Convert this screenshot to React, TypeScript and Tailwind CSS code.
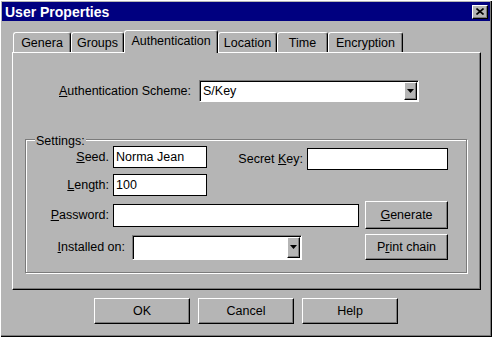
import React from 'react';

const raised =
  'border border-t-white border-l-white border-r-black border-b-black shadow-[inset_-1px_-1px_0_#7b7b7b]';
const sunken =
  'border border-t-[#7b7b7b] border-l-[#7b7b7b] border-r-white border-b-white shadow-[inset_1px_1px_0_#000]';

const tabs = [
  { label: 'Genera', w: 'w-[58px]' },
  { label: 'Groups', w: 'w-[53px]' },
  { label: 'Authentication', w: 'w-[94px]', active: true },
  { label: 'Location', w: 'w-[59px]' },
  { label: 'Time', w: 'w-[51px]' },
  { label: 'Encryption', w: 'w-[75px]' },
];

const Arrow = () => (
  <svg width="7" height="4" viewBox="0 0 7 4">
    <polygon points="0,0 7,0 3.5,4" fill="#000" />
  </svg>
);

const Combo = ({ value, className }: { value?: string; className: string }) => (
  <div className={`flex bg-white p-[1px] ${sunken} ${className}`}>
    <div className="flex-1 flex items-center pl-[2px] text-black">{value}</div>
    <div className={`w-[13px] flex items-center justify-center bg-[#b5b5b5] ${raised}`}>
      <Arrow />
    </div>
  </div>
);

const Btn = ({ children, className }: { children: React.ReactNode; className: string }) => (
  <button className={`flex items-center justify-center bg-[#b5b5b5] text-black ${raised} ${className}`}>
    {children}
  </button>
);

const Field = ({ value, className }: { value?: string; className: string }) => (
  <div className={`flex items-center bg-white border border-black pl-[2px] ${className}`}>{value}</div>
);

export default function App() {
  return (
    <div className="w-[492px] h-[337px] bg-[#b5b5b5] p-[2px] font-['Liberation_Sans',Arial,sans-serif] text-[12.5px] text-black shadow-[inset_1px_1px_0_#fff,inset_-1px_-1px_0_#000,inset_-2px_-2px_0_#7b7b7b]">
      {/* Title bar */}
      <div className="h-[19px] bg-[#000080] flex items-center justify-between pl-[3px] pr-[2px]">
        <span className="text-white font-bold text-[14px] leading-none">User Properties</span>
        <div className={`w-[16px] h-[14px] bg-[#b5b5b5] flex items-center justify-center ${raised}`}>
          <svg width="8" height="7" viewBox="0 0 8 7">
            <path d="M0.5 0.5 L7.5 6.5 M7.5 0.5 L0.5 6.5" stroke="#000" strokeWidth="1.6" />
          </svg>
        </div>
      </div>

      {/* Tabs */}
      <div className="mt-[9px] ml-[11px] flex items-end h-[22px]">
        {tabs.map((t) =>
          t.active ? (
            <div
              key={t.label}
              className={`${t.w} h-[23px] -mb-[1px] relative z-10 bg-[#b5b5b5] rounded-t-[3px] border-t border-l border-r border-t-white border-l-white border-r-black shadow-[inset_-1px_0_0_#7b7b7b] flex items-start justify-center pt-[1px]`}
            >
              {t.label}
            </div>
          ) : (
            <div
              key={t.label}
              className={`${t.w} h-[20px] rounded-t-[3px] border-t border-l border-r border-t-white border-l-white border-r-black shadow-[inset_-1px_0_0_#7b7b7b] flex items-center justify-center pt-[1px]`}
            >
              {t.label}
            </div>
          )
        )}
      </div>

      {/* Panel */}
      <div className="ml-[10px] w-[469px] h-[238px] border border-t-white border-l-white border-r-black border-b-black shadow-[inset_-1px_-1px_0_#7b7b7b] pt-[27px]">
        <div className="flex items-center pl-[46px]">
          <span className="w-[134px]">
            <u>A</u>uthentication Scheme:
          </span>
          <Combo value="S/Key" className="ml-[6px] w-[220px] h-[22px]" />
        </div>

        {/* Settings group */}
        <div className="relative ml-[12px] mt-[37px] w-[442px] h-[134px] border border-[#7b7b7b] shadow-[inset_1px_1px_0_#fff,1px_1px_0_#fff] pt-[6px]">
          <span className="absolute -top-[8px] left-[9px] bg-[#b5b5b5] px-[1px]">Settings:</span>

          <div className="flex items-start">
            <span className="w-[83px] h-[22px] flex items-center justify-end">
              <u>S</u>eed.
            </span>
            <Field value="Norma Jean" className="ml-[4px] w-[94px] h-[22px]" />
            <span className="w-[96px] h-[22px] mt-[2px] flex items-center justify-end">
              Secret&nbsp;<u>K</u>ey:
            </span>
            <Field className="ml-[4px] mt-[2px] w-[141px] h-[22px]" />
          </div>

          <div className="flex items-center mt-[4px]">
            <span className="w-[83px] text-right">
              <u>L</u>ength:
            </span>
            <Field value="100" className="ml-[4px] w-[94px] h-[22px]" />
          </div>

          <div className="flex items-center mt-[5px]">
            <span className="w-[83px] text-right">
              <u>P</u>assword:
            </span>
            <Field className="ml-[4px] w-[246px] h-[23px]" />
            <Btn className="ml-[6px] w-[83px] h-[28px]">
              <span>
                <u>G</u>enerate
              </span>
            </Btn>
          </div>

          <div className="flex items-center mt-[5px]">
            <span className="w-[99px] text-right">
              <u>I</u>nstalled on:
            </span>
            <Combo className="ml-[7px] w-[170px] h-[25px]" />
            <Btn className="ml-[63px] w-[83px] h-[26px]">
              <span>
                P<u>r</u>int chain
              </span>
            </Btn>
          </div>
        </div>
      </div>

      {/* Dialog buttons */}
      <div className="flex gap-[8px] ml-[92px] mt-[8px]">
        <Btn className="w-[96px] h-[26px]">OK</Btn>
        <Btn className="w-[96px] h-[26px]">Cancel</Btn>
        <Btn className="w-[96px] h-[26px]">Help</Btn>
      </div>
    </div>
  );
}
